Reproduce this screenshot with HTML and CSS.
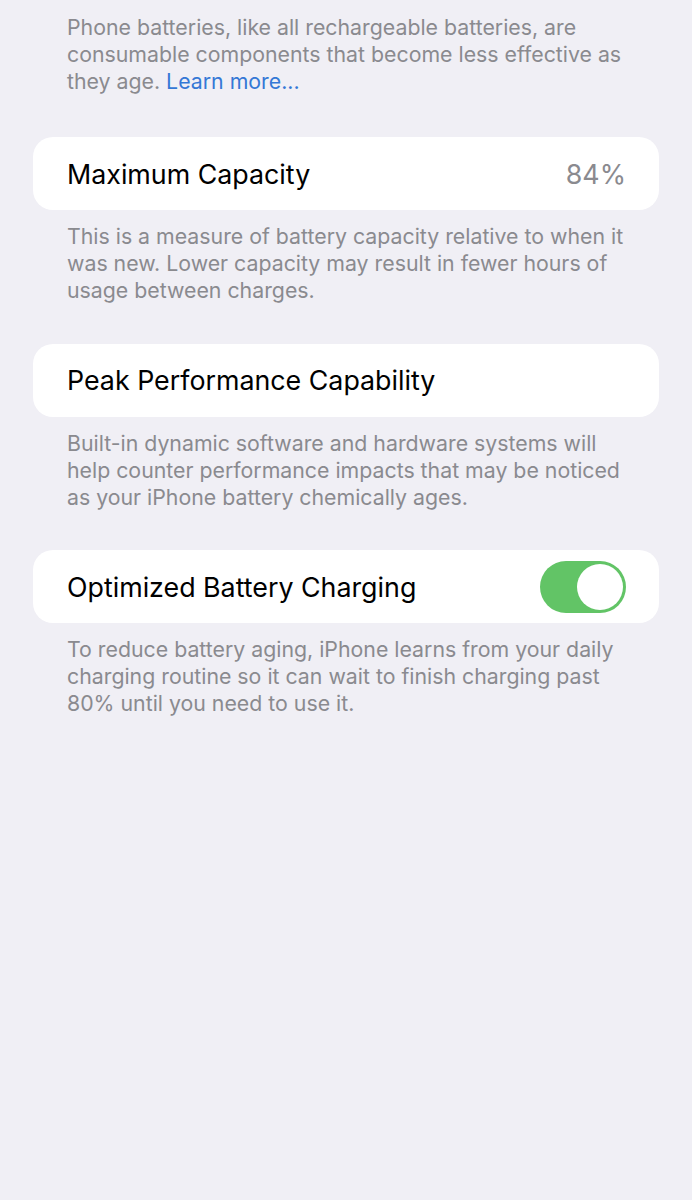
FILE: index.html
```html
<!DOCTYPE html>
<html lang="en">
<head>
  <meta charset="UTF-8" />
  <title>Battery Health</title>
  <link rel="stylesheet" href="styles.css">
</head>
<body>
  <div class="page">
    <p class="note intro">Phone batteries, like all rechargeable batteries, are consumable components that become less effective as they age. <a href="#">Learn more...</a></p>

    <div class="group">
      <div class="row">
        <span class="title">Maximum Capacity</span>
        <span class="value">84%</span>
      </div>
    </div>
    <p class="note">This is a measure of battery capacity relative to when it was new. Lower capacity may result in fewer hours of usage between charges.</p>

    <div class="group">
      <div class="row">
        <span class="title">Peak Performance Capability</span>
      </div>
    </div>
    <p class="note">Built-in dynamic software and hardware systems will help counter performance impacts that may be noticed as your iPhone battery chemically ages.</p>

    <div class="group">
      <div class="row">
        <span class="title">Optimized Battery Charging</span>
        <span class="toggle on"><span class="knob"></span></span>
      </div>
    </div>
    <p class="note">To reduce battery aging, iPhone learns from your daily charging routine so it can wait to finish charging past 80% until you need to use it.</p>
  </div>
</body>
</html>
```

FILE: styles.css
```css
body { margin: 0; background: #f0eff5; font-family: Inter, "Noto Sans", sans-serif; -webkit-font-smoothing: antialiased; }
.page { padding: 14px 33px 0 33px; }
.note { margin: 0 0 39.5px 0; padding: 0 34px; font-size: 21.3px; line-height: 27px; color: #8a8a8f; }
.note.intro { margin-bottom: 42px; }
.note a { color: #3478d6; text-decoration: none; }
.group { background: #fff; border-radius: 20px; margin-bottom: 13px; }
.row {
  height: 73px;
  display: flex;
  align-items: center;
  justify-content: space-between;
  padding: 0 33px 0 34px;
}
.title { font-size: 26.8px; color: #000; }
.value { font-size: 26.8px; color: #8a8a8f; }
.toggle {
  width: 86px;
  height: 52px;
  border-radius: 26px;
  background: #62c466;
  box-sizing: border-box;
  padding: 3px;
  display: flex;
  justify-content: flex-end;
}
.knob { width: 46px; height: 46px; border-radius: 50%; background: #fff; }
```
